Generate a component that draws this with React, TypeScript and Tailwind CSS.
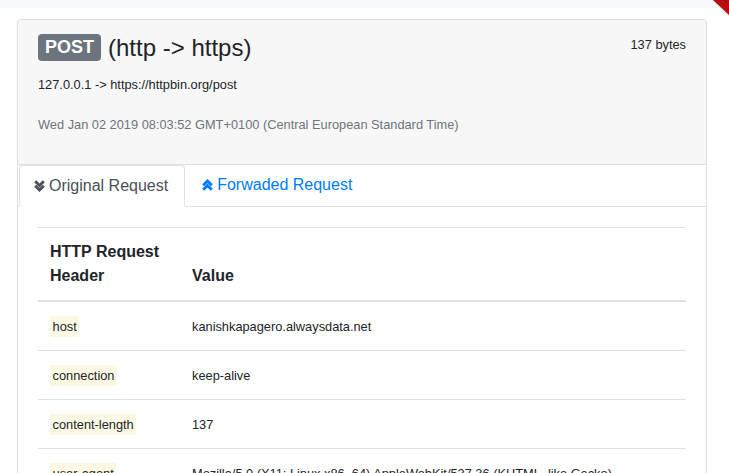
import React from "react";

const rows = [
  { key: "host", value: "kanishkapagero.alwaysdata.net" },
  { key: "connection", value: "keep-alive" },
  { key: "content-length", value: "137" },
  {
    key: "user-agent",
    value:
      "Mozilla/5.0 (X11; Linux x86_64) AppleWebKit/537.36 (KHTML, like Gecko) Chrome/71.0.3578.98 Safari/537.36",
  },
  { key: "accept", value: "*/*" },
];

function DoubleAngle({ up }: { up?: boolean }) {
  return (
    <svg width="11" height="12" viewBox="0 0 11 12" className={up ? "" : "rotate-180"}>
      <polyline points="1.2,6.2 5.5,2 9.8,6.2" fill="none" stroke="currentColor" strokeWidth="2.9" />
      <polyline points="1.2,10.7 5.5,6.5 9.8,10.7" fill="none" stroke="currentColor" strokeWidth="2.9" />
    </svg>
  );
}

export default function App() {
  return (
    <div className="relative min-h-screen overflow-hidden bg-white font-['Liberation_Sans',Arial,sans-serif] text-[#212529]">
      <div className="h-2 bg-[#f8f9fa]" />
      {/* corner ribbon */}
      <svg className="absolute right-0 top-0" width="20" height="20" viewBox="0 0 20 20">
        <polygon points="2,0 20,0 20,17" fill="#ededed" />
        <polygon points="4,0 20,0 20,15" fill="#b30f0f" />
      </svg>

      <div className="px-[17px] pt-[11px]">
        <div className="w-[690px] rounded-[4px] border border-[#dfdfdf]">
          {/* header */}
          <div className="rounded-t-[4px] border-b border-[#dfdfdf] bg-[#f7f7f7] px-5 pb-[29px] pt-3">
            <div className="flex items-start justify-between">
              <div className="flex h-[31px] items-center gap-[7px]">
                <span className="rounded-[4px] bg-[#6c757d] px-[7px] py-[4px] text-[18px] font-bold leading-[19px] text-white">
                  POST
                </span>
                <span className="text-[24px] leading-[29px]">(http -&gt; https)</span>
              </div>
              <span className="mt-[3px] text-[12.8px] leading-5">137 bytes</span>
            </div>
            <div className="mt-[12px] text-[12.8px] leading-5">127.0.0.1 -&gt; https://httpbin.org/post</div>
            <div className="mt-[20px] text-[12.8px] leading-5 text-[#6c757d]">
              Wed Jan 02 2019 08:03:52 GMT+0100 (Central European Standard Time)
            </div>
          </div>

          {/* tabs */}
          <div className="flex border-b border-[#dee2e6] pl-px">
            <div className="-mb-px flex items-center gap-[4px] rounded-t-[4px] border border-[#dee2e6] border-b-white bg-white pb-2 pl-[14px] pr-4 pt-[7px] text-[16px] leading-6 text-[#495057]">
              <DoubleAngle />
              <span>Original Request</span>
            </div>
            <div className="flex items-center gap-[4px] border border-transparent px-4 pb-2 pt-[7px] text-[16px] leading-6 text-[#007bff]">
              <DoubleAngle up />
              <span>Forwaded Request</span>
            </div>
          </div>

          {/* table */}
          <div className="px-5 pt-5">
            <table className="w-full border-collapse">
              <thead>
                <tr className="border-t border-b-2 border-[#dee2e6]">
                  <th className="w-[142px] p-3 text-left align-bottom text-[16px] font-bold leading-6">
                    HTTP Request Header
                  </th>
                  <th className="p-3 text-left align-bottom text-[16px] font-bold leading-6">Value</th>
                </tr>
              </thead>
              <tbody>
                {rows.map((r) => (
                  <tr key={r.key} className="border-t border-[#dee2e6]">
                    <td className="px-3 pb-[11px] pt-[13px] align-top text-[12.8px] leading-6">
                      <span className="bg-[#fcf8e3] px-[2.6px] py-[2.6px]">{r.key}</span>
                    </td>
                    <td className="px-3 pb-[11px] pt-[13px] align-top text-[12.8px] leading-6">{r.value}</td>
                  </tr>
                ))}
              </tbody>
            </table>
          </div>
        </div>
      </div>
    </div>
  );
}
